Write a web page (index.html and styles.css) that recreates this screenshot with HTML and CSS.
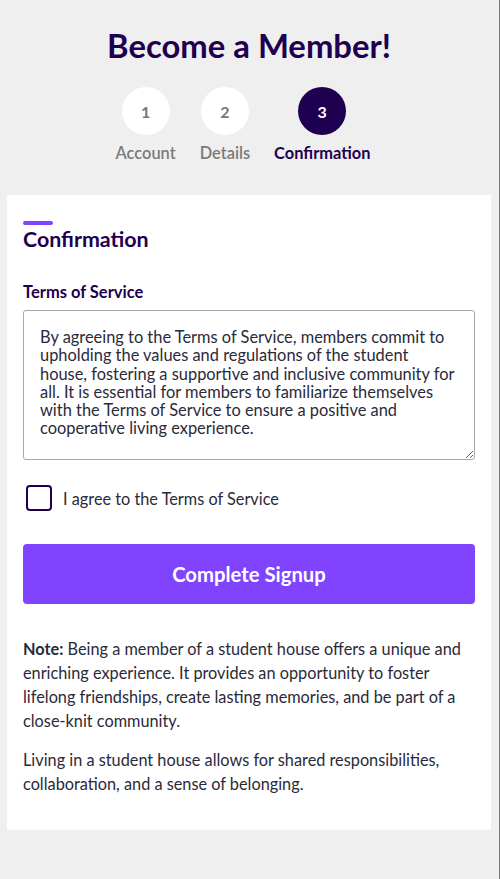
FILE: index.html
```html
<!DOCTYPE html>
<html lang="en">
<head>
<meta charset="utf-8">
<title>Become a Member!</title>
<link rel="stylesheet" href="styles.css">
</head>
<body>
<div class="page">
  <header class="head">
    <h1 class="title">Become a Member!</h1>
    <ol class="steps">
      <li class="step"><span class="dot">1</span><span class="step-label">Account</span></li>
      <li class="step"><span class="dot">2</span><span class="step-label">Details</span></li>
      <li class="step active"><span class="dot">3</span><span class="step-label">Confirmation</span></li>
    </ol>
  </header>
  <main class="card">
    <div class="accent"></div>
    <h2 class="card-title">Confirmation</h2>
    <label class="field-label" for="tos">Terms of Service</label>
    <textarea id="tos" class="tos" readonly>By agreeing to the Terms of Service, members commit to upholding the values and regulations of the student house, fostering a supportive and inclusive community for all. It is essential for members to familiarize themselves with the Terms of Service to ensure a positive and cooperative living experience.</textarea>
    <label class="agree"><span class="box"></span><span>I agree to the Terms of Service</span></label>
    <button class="submit" type="button">Complete Signup</button>
    <p class="note"><strong>Note:</strong> Being a member of a student house offers a unique and enriching experience. It provides an opportunity to foster lifelong friendships, create lasting memories, and be part of a close-knit community.</p>
    <p class="note">Living in a student house allows for shared responsibilities, collaboration, and a sense of belonging.</p>
  </main>
</div>
</body>
</html>
```
FILE: styles.css
```css
* { box-sizing: border-box; }
html, body { margin: 0; padding: 0; }
body {
  background: #efefef;
  font-family: Lato, "Open Sans", sans-serif;
  color: #2a2a3a;
}
.page {
  min-height: 879px;
  padding: 0 8px 0 7px;
  border-right: 1px solid #7a7a7a;
}
.head {
  padding-top: 25px;
  display: flex;
  flex-direction: column;
  align-items: center;
}
.title {
  margin: 0;
  font-size: 32.8px;
  line-height: 42px;
  font-weight: 700;
  color: #1f0050;
}
.steps {
  list-style: none;
  margin: 20px 12px 0 0;
  padding: 0;
  display: flex;
  gap: 24px;
}
.step {
  display: flex;
  flex-direction: column;
  align-items: center;
  gap: 8px;
}
.dot {
  width: 48px;
  height: 48px;
  border-radius: 50%;
  background: #fff;
  color: #777;
  font-weight: 700;
  font-size: 16px;
  display: flex;
  align-items: center;
  justify-content: center;
}
.step-label {
  font-size: 16.4px;
  line-height: 20px;
  font-weight: 600;
  color: #7a7a7a;
}
.active .dot { background: #1f0050; color: #fff; }
.active .step-label { color: #1f0050; font-weight: 700; }
.card {
  margin-top: 32px;
  background: #fff;
  padding: 26px 16px 30px;
  display: flex;
  flex-direction: column;
  min-height: 635px;
}
.accent {
  width: 30px;
  height: 4px;
  border-radius: 2px;
  background: #8044ff;
}
.card-title {
  margin: 1px 0 0;
  font-size: 21.4px;
  line-height: 26px;
  font-weight: 700;
  color: #1f0050;
}
.field-label {
  margin-top: 30px;
  font-size: 16.5px;
  line-height: 20px;
  font-weight: 700;
  color: #1f0050;
}
.tos {
  margin-top: 8px;
  width: 100%;
  height: 150px;
  border: 1px solid #a8a8a8;
  border-radius: 3px;
  padding: 17px 17px 14px 16px;
  font-family: inherit;
  font-size: 16.4px;
  line-height: 18.3px;
  color: #2a2a3a;
  resize: vertical;
}
.agree {
  margin-top: 25px;
  display: flex;
  align-items: center;
  gap: 11px;
  font-size: 16.3px;
  color: #2a2a3a;
  padding-left: 3px;
}
.box {
  width: 26px;
  height: 26px;
  border: 2px solid #1f0050;
  border-radius: 4px;
}
.submit {
  margin-top: 33px;
  height: 60px;
  border: 0;
  border-radius: 4px;
  background: #8044ff;
  color: #fff;
  font-family: inherit;
  font-size: 20.3px;
  font-weight: 700;
}
.note {
  margin: 33px 0 0;
  font-size: 16.3px;
  line-height: 24px;
  color: #2a2a3a;
}
.note + .note { margin-top: 15px; }
.note strong { font-weight: 700; }
```
